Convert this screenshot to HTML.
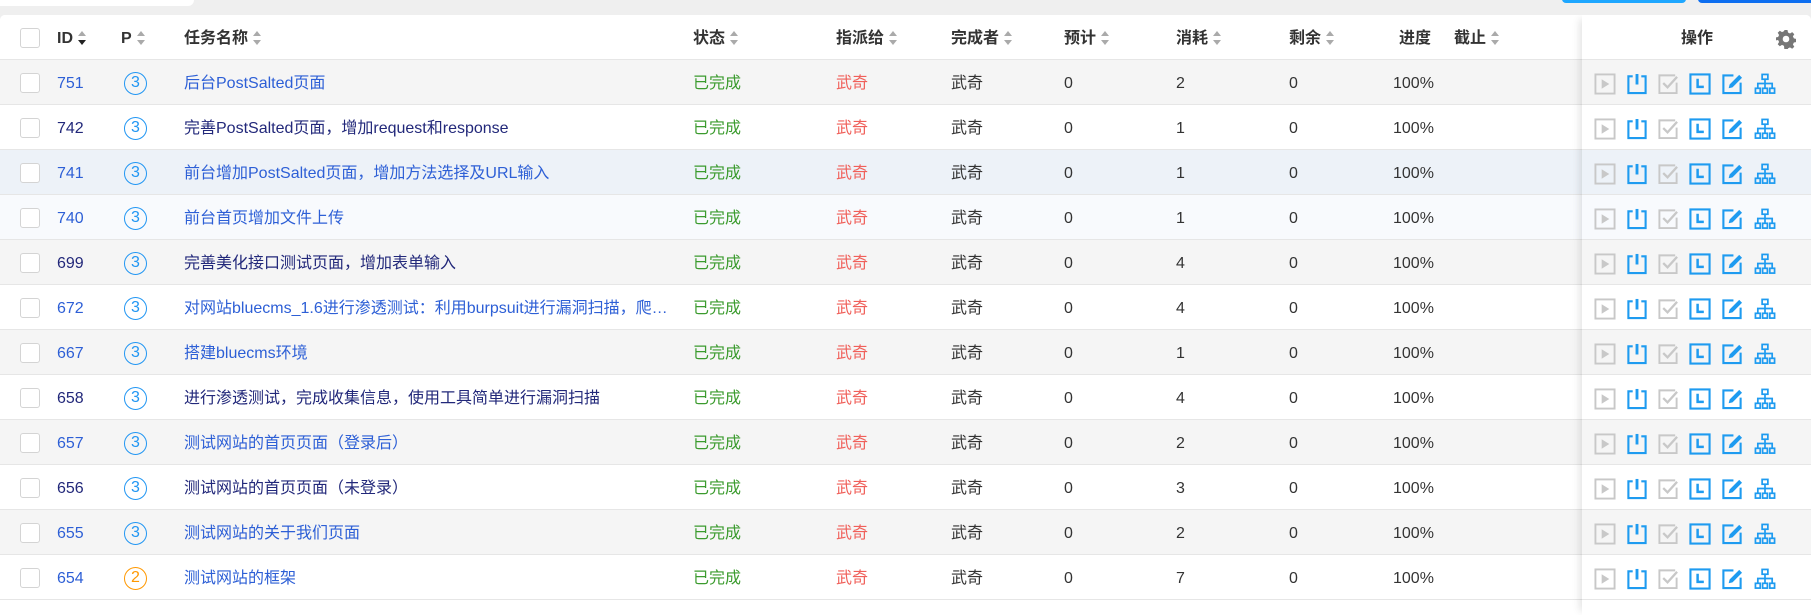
<!DOCTYPE html>
<html><head><meta charset="utf-8"><style>
*{box-sizing:border-box;margin:0;padding:0}
body{width:1811px;height:601px;overflow:hidden;background:#efefef;font-family:"Liberation Sans","Noto Sans CJK SC",sans-serif;font-size:16px;color:#333;position:relative}
.search{position:absolute;left:0;top:-10px;width:194px;height:16px;background:#fff;border-radius:0 0 6px 0}
.btn1{position:absolute;left:1562px;top:-6px;width:124px;height:9px;background:#1ea7ff;border-radius:4px}
.btn2{position:absolute;left:1698px;top:-6px;width:120px;height:9px;background:#0d6ef0;border-radius:4px}
.tbl{position:absolute;left:0;top:15px;width:1811px;height:600px;background:#fff;border-radius:5px 5px 0 0;overflow:hidden}
.row{position:absolute;left:0;width:1811px;height:45px;border-bottom:1px solid #e6e6e6}
.row>span{position:absolute;top:2px;line-height:44px;white-space:nowrap}
.hd{font-weight:bold;color:#333}
.cb{position:absolute;left:20px;top:13px;width:20px;height:20px;border:1.5px solid #d4d4d4;border-radius:3px;background:#fff}
.pc{position:absolute;left:124px;top:12px;width:23px;height:23px;border:1.6px solid #2196f3;border-radius:50%;color:#2196f3;font-size:16px;line-height:20px;text-align:center}
.sort{display:inline-block;vertical-align:middle;margin-left:5px;width:9px;height:14px;position:relative;top:-1px}
.sort:before,.sort:after{content:"";position:absolute;left:0;border-left:4.5px solid transparent;border-right:4.5px solid transparent}
.sort:before{top:0;border-bottom:5px solid #aaa}
.sort:after{bottom:0;border-top:5px solid #aaa}
.sort.dn:after{border-top-color:#222}
.v{color:#2d5fd6}.d{color:#22287a}
.g{color:#3b9b2e}.r{color:#f0605a}
.ops{position:absolute;left:1582px;top:0;width:229px;height:600px;box-shadow:-6px 0 8px -4px rgba(0,0,0,.12)}
.ic{position:absolute;top:13px;width:22px;height:22px}
</style></head><body>
<div class="search"></div><div class="btn1"></div><div class="btn2"></div>
<div class="tbl" id="t"></div>
<script>
const rows=[
[751,3,"后台PostSalted页面",2,1,"#f5f5f5"],
[742,3,"完善PostSalted页面，增加request和response",1,0,"#fff"],
[741,3,"前台增加PostSalted页面，增加方法选择及URL输入",1,1,"#edf2f8"],
[740,3,"前台首页增加文件上传",1,1,"#f8fafd"],
[699,3,"完善美化接口测试页面，增加表单输入",4,0,"#f5f5f5"],
[672,3,"对网站bluecms_1.6进行渗透测试：利用burpsuit进行漏洞扫描，爬…",4,1,"#fff"],
[667,3,"搭建bluecms环境",1,1,"#f5f5f5"],
[658,3,"进行渗透测试，完成收集信息，使用工具简单进行漏洞扫描",4,0,"#fff"],
[657,3,"测试网站的首页页面（登录后）",2,1,"#f5f5f5"],
[656,3,"测试网站的首页页面（未登录）",3,0,"#fff"],
[655,3,"测试网站的关于我们页面",2,1,"#f5f5f5"],
[654,2,"测试网站的框架",7,1,"#fff"]];
const S='<i class="sort"></i>';
let h=`<div class="row hd" style="top:0;background:#fff"><div class="cb"></div>
<span style="left:57px">ID<i class="sort dn"></i></span><span style="left:121px">P${S}</span>
<span style="left:184px">任务名称${S}</span><span style="left:693px">状态${S}</span>
<span style="left:836px">指派给${S}</span><span style="left:951px">完成者${S}</span>
<span style="left:1064px">预计${S}</span><span style="left:1176px">消耗${S}</span>
<span style="left:1289px">剩余${S}</span><span style="left:1399px">进度</span><span style="left:1454px">截止${S}</span></div>`;
const B='#1e9bf0',G='#c8c8c8';
const icons=`
<svg class="ic" style="left:1594px" viewBox="0 0 23 23"><rect x="1.5" y="1.5" width="20" height="20" fill="none" stroke="${G}" stroke-width="2"/><path d="M8 6.5L16 11.5L8 16.5Z" fill="${G}"/></svg>
<svg class="ic" style="left:1626px" viewBox="0 0 23 23"><path d="M7 3.5H2.5V21H20.5V3.5H16" fill="none" stroke="${B}" stroke-width="2.2"/><path d="M11.5 1V12" stroke="${B}" stroke-width="3"/></svg>
<svg class="ic" style="left:1657px" viewBox="0 0 23 23"><path d="M19 2.5H2.5V21H20.5V10" fill="none" stroke="${G}" stroke-width="2"/><path d="M6.5 10.5L11 15L21 4" fill="none" stroke="${G}" stroke-width="2.4"/></svg>
<svg class="ic" style="left:1689px" viewBox="0 0 23 23"><rect x="1.5" y="1.5" width="20" height="20" fill="none" stroke="${B}" stroke-width="2.2"/><path d="M9 6V14.5H15.5" fill="none" stroke="${B}" stroke-width="2.6"/></svg>
<svg class="ic" style="left:1721px" viewBox="0 0 23 23"><path d="M13 2.5H2.5V21H20.5V10" fill="none" stroke="${B}" stroke-width="2.2"/><path d="M8 16L9 12L19 2L22 5L12 15Z" fill="${B}"/></svg>
<svg class="ic" style="left:1754px" viewBox="0 0 23 23" fill="none" stroke="${B}" stroke-width="1.8"><rect x="8.5" y="1.5" width="6" height="5"/><path d="M11.5 6.5V11M4 16V11H19V16M11.5 11V16"/><rect x="1.5" y="16" width="5" height="5"/><rect x="9" y="16" width="5" height="5"/><rect x="16.5" y="16" width="5" height="5"/></svg>`;
rows.forEach((r,i)=>{const c=[751,741,740,672,667,657,655,654].includes(r[0])?'v':'d';
h+=`<div class="row" style="top:${45*(i+1)}px;background:${r[5]}"><div class="cb"></div>
<span class="${c}" style="left:57px">${r[0]}</span><div class="pc" style="${r[1]==2?'border-color:#ff9800;color:#ff9800':''}">${r[1]}</div>
<span class="${c}" style="left:184px">${r[2]}</span><span class="g" style="left:693px">已完成</span>
<span class="r" style="left:836px">武奇</span><span style="left:951px">武奇</span>
<span style="left:1064px">0</span><span style="left:1176px">${r[3]}</span><span style="left:1289px">0</span>
<span style="left:1393px">100%</span>${icons}</div>`;});
h+=`<div class="ops"></div><div style="position:absolute;left:1681px;top:2px;line-height:44px;font-weight:bold">操作</div>
<svg style="position:absolute;left:1776px;top:14px" width="20" height="20" viewBox="0 0 20 20"><path fill="#777" d="M8.5 1h3l.5 2.5 2 1 2.2-1.4 2.1 2.1-1.4 2.2 1 2 2.6.6v3l-2.6.5-1 2 1.4 2.2-2.1 2.1-2.2-1.4-2 1-.5 2.6h-3L8 16.9l-2-1-2.2 1.4-2.1-2.1 1.4-2.2-1-2L-.5 11.5v-3L2.1 8l1-2L1.7 3.8l2.1-2.1L6 3.1l2-1z"/><circle cx="10" cy="10" r="3.3" fill="#fff"/></svg>`;
document.getElementById('t').innerHTML=h;
</script>
</body></html>
